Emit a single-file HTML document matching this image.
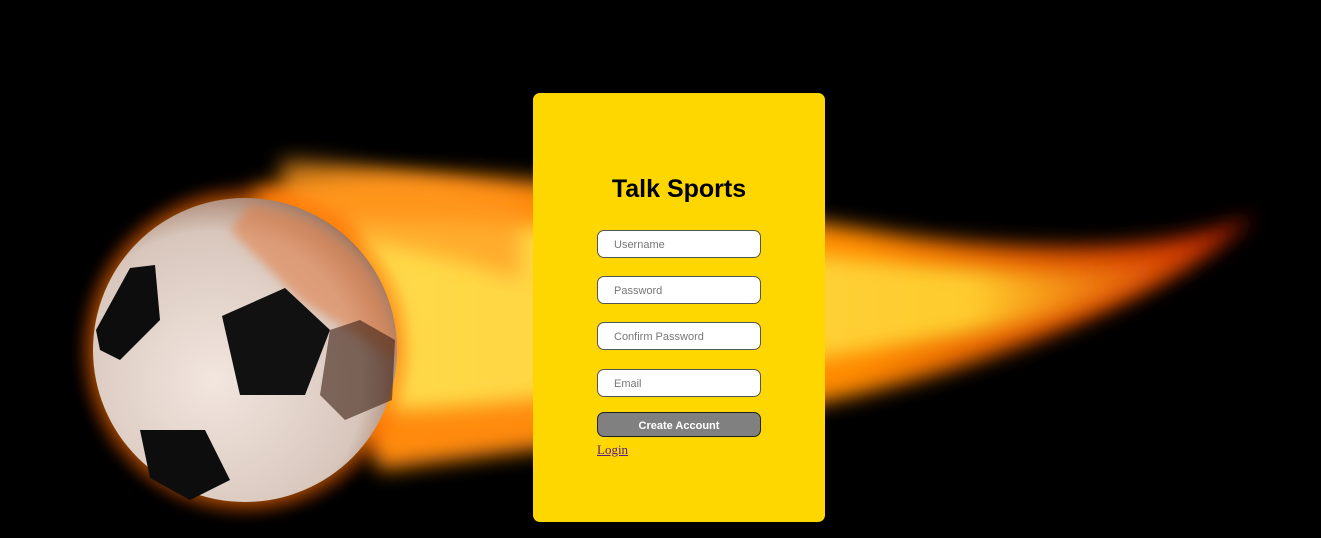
<!DOCTYPE html>
<html><head><meta charset="utf-8"><style>
html,body{margin:0;padding:0;width:1321px;height:538px;background:#000;overflow:hidden;font-family:"Liberation Sans",Arial,sans-serif}
#bg{position:absolute;left:0;top:0}
.card{position:absolute;left:533px;top:93px;width:292px;height:429px;background:#fed700;border-radius:7px}
h1{position:absolute;left:0;width:292px;margin:0;text-align:center;font-size:25px;font-weight:bold;color:#000;line-height:30px}
.in{position:absolute;left:64px;width:162px;height:26px;background:#fff;border:1px solid #555;border-radius:7px;font-size:11px;color:#777;line-height:28px;text-indent:16px}
.btn{position:absolute;left:64px;top:319px;width:162px;height:23px;background:#808080;border:1px solid #222;border-radius:7px;color:#fff;font-size:11px;font-weight:bold;text-align:center;line-height:26px}
.login{position:absolute;left:64px;top:349px;font-family:"Liberation Serif",serif;font-size:13px;color:#551a8b;text-decoration:underline}
</style></head><body>
<svg id="bg" width="1321" height="538" viewBox="0 0 1321 538">
<defs>
<filter id="b1" x="-20%" y="-50%" width="140%" height="200%"><feGaussianBlur stdDeviation="10"/></filter>
<filter id="b2"><feGaussianBlur stdDeviation="5"/></filter>
<linearGradient id="tail" x1="0" y1="0" x2="1" y2="0">
<stop offset="0" stop-color="#ff8a10"/><stop offset="0.6" stop-color="#ff8a00"/><stop offset="1" stop-color="#c02000"/></linearGradient>
<linearGradient id="core" x1="0" y1="0" x2="1" y2="0">
<stop offset="0" stop-color="#ffe050"/><stop offset="0.7" stop-color="#ffd030"/><stop offset="1" stop-color="#ff7000" stop-opacity="0"/></linearGradient>
<radialGradient id="ball" cx="0.4" cy="0.6" r="0.7"><stop offset="0" stop-color="#f2e6df"/><stop offset="0.7" stop-color="#d8c6bc"/><stop offset="1" stop-color="#8a5a40"/></radialGradient>
<radialGradient id="halo" cx="0.5" cy="0.5" r="0.5"><stop offset="0.8" stop-color="#ff8a00"/><stop offset="1" stop-color="#ff5000" stop-opacity="0"/></radialGradient>
</defs>
<path d="M250 190 C420 150 600 190 900 235 C1050 255 1180 250 1255 215 C1200 270 1100 320 980 360 C800 420 600 440 380 470 Z" fill="url(#tail)" filter="url(#b1)"/>
<path d="M350 220 C550 215 800 260 1000 270 C1120 275 1200 250 1240 225 C1180 290 1050 320 900 345 C700 380 500 410 380 410 Z" fill="url(#core)" filter="url(#b1)" opacity="0.95"/>
<path d="M280 160 C340 160 420 175 520 200 L520 280 C440 250 350 240 290 230 Z" fill="#ff9a20" filter="url(#b1)" opacity="0.7"/>
<circle cx="245" cy="350" r="170" fill="url(#halo)" filter="url(#b2)"/>
<circle cx="245" cy="350" r="152" fill="url(#ball)"/>
<path d="M250 205 C340 215 395 280 397 360 L300 300 L230 230 Z" fill="#e07a40" opacity="0.55" filter="url(#b2)"/>
<polygon points="222,316 285,288 330,330 305,395 240,395" fill="#111"/>
<polygon points="96,330 130,268 155,265 160,320 120,360 100,350" fill="#0d0d0d"/>
<polygon points="140,430 205,430 230,480 190,500 150,478" fill="#0d0d0d"/>
<polygon points="330,330 360,320 395,340 392,400 345,420 320,395" fill="#3a1e12" opacity="0.6"/>
</svg>
<div class="card">
<h1 style="top:81px">Talk Sports</h1>
<div class="in" style="top:137px">Username</div>
<div class="in" style="top:183px">Password</div>
<div class="in" style="top:229px">Confirm Password</div>
<div class="in" style="top:276px">Email</div>
<div class="btn">Create Account</div>
<div class="login">Login</div>
</div>
</body></html>
